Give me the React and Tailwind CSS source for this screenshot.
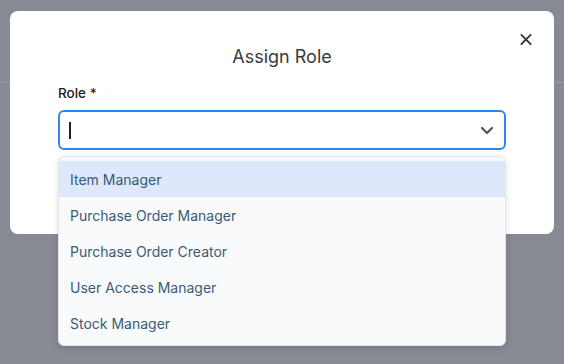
import React from "react";

const options = [
  "Item Manager",
  "Purchase Order Manager",
  "Purchase Order Creator",
  "User Access Manager",
  "Stock Manager",
];

export default function App() {
  return (
    <div
      className="relative w-[564px] h-[364px] overflow-hidden bg-[#878a92]"
      style={{ fontFamily: "Inter, 'Noto Sans', sans-serif" }}
    >
      <div className="h-[83px] border-b border-[#979aa1]" />

      {/* Modal */}
      <div className="absolute left-[10px] top-[11px] w-[544px] h-[223px] rounded-[8px] bg-white">
        <button className="absolute left-[510px] top-[22px] w-[12px] h-[12px] flex items-center justify-center">
          <svg width="13" height="13" viewBox="0 0 13 13" fill="none">
            <path d="M1.5 1.5L11.5 11.5M11.5 1.5L1.5 11.5" stroke="#333" strokeWidth="2" strokeLinecap="round" />
          </svg>
        </button>
        <div className="px-[48px] pt-[32px] flex flex-col">
          <h2 className="text-center text-[18px] leading-[28px] text-[#3a3a3a] font-normal">Assign Role</h2>
          <label className="block mt-[12px] text-[13.5px] leading-[20px] font-medium text-[#222]">Role *</label>
          <div className="mt-[7px] h-[40px] w-full rounded-[6px] border-2 border-[#2f86f2] bg-white flex items-center justify-between pl-[9px] pr-[10px]">
            <span className="w-[1.5px] h-[17px] bg-[#222]" />
            <svg width="14" height="9" viewBox="0 0 14 9" fill="none">
              <path d="M2 2L7 7L12 2" stroke="#555" strokeWidth="2.2" strokeLinecap="round" strokeLinejoin="round" />
            </svg>
          </div>
        </div>
      </div>

      {/* Dropdown */}
      <div className="absolute left-[58px] top-[156px] w-[448px] rounded-[6px] border border-[#e3e5e9] bg-[#f8fafc] py-[4px] shadow-[0_2px_6px_rgba(0,0,0,0.12)] flex flex-col">
        {options.map((o, i) => (
          <div
            key={o}
            className={`h-[36px] flex items-center px-[11px] text-[14px] text-[#3b5a74] ${i === 0 ? "bg-[#dde9fb]" : ""}`}
          >
            {o}
          </div>
        ))}
      </div>
    </div>
  );
}
